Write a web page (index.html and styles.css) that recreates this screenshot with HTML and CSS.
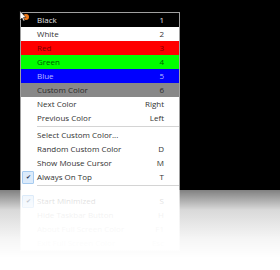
FILE: index.html
```html
<!DOCTYPE html>
<html lang="en">
<head>
  <meta charset="UTF-8">
  <meta name="viewport" content="width=device-width, initial-scale=1.0">
  <title>Screen Color Menu</title>
  <link rel="stylesheet" href="styles.css">
</head>

<body>
  <div class="stage">
    <div class="menu">
      <div class="item swatch black"><span>Black</span><span class="key">1</span></div>
      <div class="item swatch white"><span>White</span><span class="key">2</span></div>
      <div class="item swatch red"><span>Red</span><span class="key">3</span></div>
      <div class="item swatch green"><span>Green</span><span class="key">4</span></div>
      <div class="item swatch blue"><span>Blue</span><span class="key">5</span></div>
      <div class="item swatch gray"><span>Custom Color</span><span class="key">6</span></div>
      <div class="item"><span>Next Color</span><span class="key">Right</span></div>
      <div class="item"><span>Previous Color</span><span class="key">Left</span></div>
      <div class="sep"></div>
      <div class="item"><span>Select Custom Color...</span><span class="key"></span></div>
      <div class="item"><span>Random Custom Color</span><span class="key">D</span></div>
      <div class="item"><span>Show Mouse Cursor</span><span class="key">M</span></div>
      <div class="item checked"><span>Always On Top</span><span class="key">T</span></div>
      <div class="sep last"></div>
      <div class="item faded checked"><span>Start Minimized</span><span class="key">S</span></div>
      <div class="item faded"><span>Hide Taskbar Button</span><span class="key">H</span></div>
      <div class="item faded"><span>About Full Screen Color</span><span class="key">F1</span></div>
      <div class="item faded"><span>Exit Full Screen Color</span><span class="key">Esc</span></div>
    </div>

    <svg class="cursor" width="14" height="14" viewBox="0 0 14 14">
      <circle cx="8" cy="7" r="3" fill="#f07a1a"/>
      <path d="M2 1 L2 10 L4 8 L5.5 11 L6.8 10.4 L5.4 7.5 L8 7.5 Z" fill="#fff" stroke="#222" stroke-width="0.6"/>
    </svg>

    <div class="fade"></div>
  </div>
</body>
</html>
```

FILE: styles.css
```css
body {
  margin: 0;
  background: #000;
  font-family: "Open Sans", "Noto Sans", sans-serif;
}

.stage {
  position: relative;
  width: 280px;
  height: 270px;
  overflow: hidden;
  padding: 12px 0 0 20px;
  box-sizing: border-box;
}

.menu {
  width: 160px;
  box-sizing: border-box;
  border: 1px solid #a0a0a0;
  background: #fff;
}

.item {
  position: relative;
  display: flex;
  justify-content: space-between;
  height: 14px;
  line-height: 14px;
  padding: 0 15px 0 16px;
  font-size: 8px;
  color: #333;
  white-space: nowrap;
}

.black { background: #000; color: #e4e4e4; }
.white { background: #fff; color: #333; }
.red { background: #ff0000; color: #7a0000; }
.green { background: #00ff00; color: #005a00; }
.blue { background: #0000ff; color: #b8bcff; }
.gray { background: #888; color: #2c2c2c; }

.sep {
  height: 1px;
  margin: 1px 0 1px 16px;
  background: #d4d4d4;
}

.sep.last {
  margin-bottom: 8px;
}

.checked::before {
  content: "\2714";
  position: absolute;
  left: 1px;
  top: 1px;
  width: 10px;
  height: 11px;
  line-height: 11px;
  text-align: center;
  font-size: 6px;
  color: #2a3a5a;
  background: #dcebfb;
  border: 1px solid #a6cbf0;
  border-radius: 1px;
}

.faded {
  color: #999;
}

.cursor {
  position: absolute;
  left: 18px;
  top: 10px;
}

.fade {
  position: absolute;
  left: 0;
  right: 0;
  top: 190px;
  bottom: 0;
  background: linear-gradient(rgba(255,255,255,0.5), rgba(255,255,255,0.85) 25%, rgba(255,255,255,0.96) 60%, #fff 85%);
}
```
